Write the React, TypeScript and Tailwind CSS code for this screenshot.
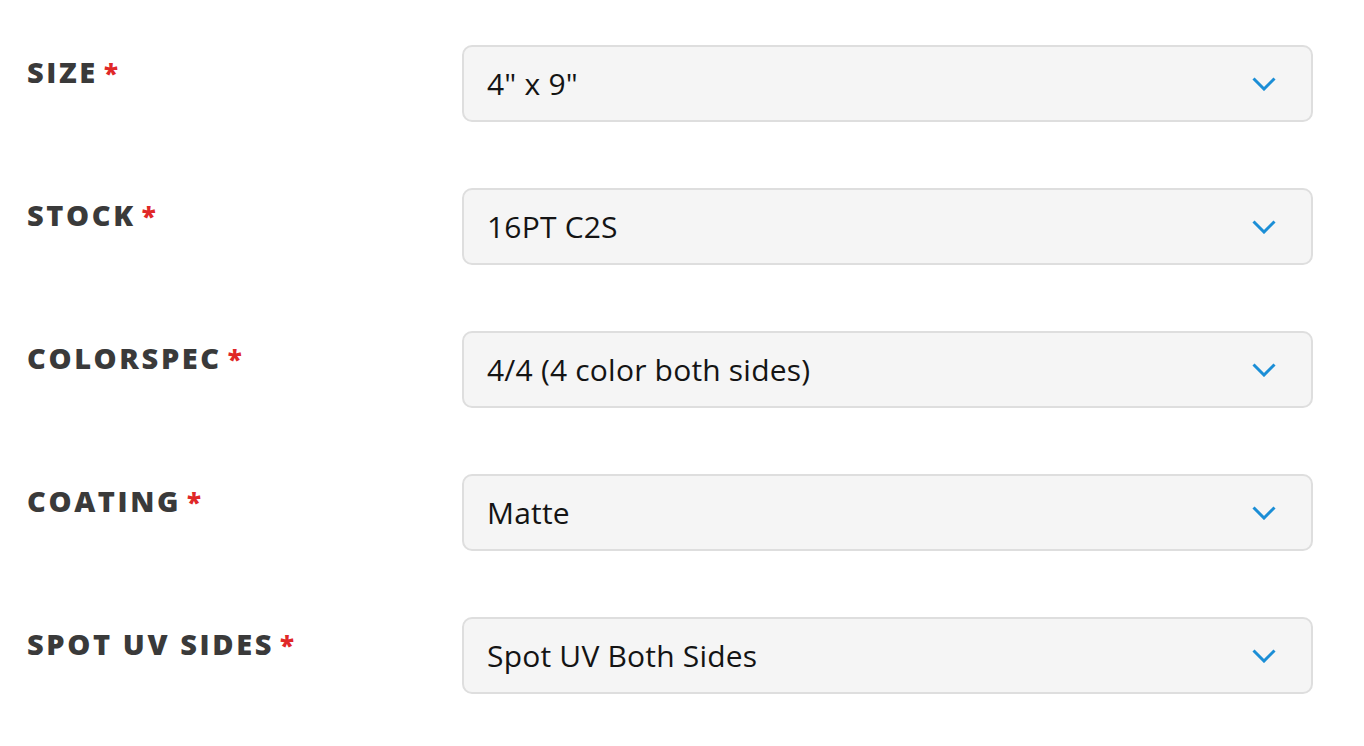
import React from "react";

const fields = [
  { label: "SIZE", value: '4" x 9"' },
  { label: "STOCK", value: "16PT C2S" },
  { label: "COLORSPEC", value: "4/4 (4 color both sides)" },
  { label: "COATING", value: "Matte" },
  { label: "SPOT UV SIDES", value: "Spot UV Both Sides" },
];

function Chevron() {
  return (
    <svg width="24" height="14" viewBox="0 0 24 14" fill="none" className="shrink-0">
      <path d="M1.5 1.5 L12 12 L22.5 1.5" stroke="#1b8ed6" strokeWidth="3" />
    </svg>
  );
}

export default function App() {
  return (
    <div className="min-h-screen bg-white pl-[27px] pt-[45px] font-['Open_Sans',sans-serif]">
      <div className="flex flex-col gap-[66px]">
        {fields.map((f) => (
          <div key={f.label} className="flex">
            <div className="w-[435px] shrink-0 pt-[9px]">
              <span className="text-[29px] font-extrabold leading-[36px] tracking-[2.6px] text-[#3a3a3a]">
                {f.label}
              </span>
              <span className="ml-[6px] text-[26px] font-extrabold leading-[36px] text-[#e02828]">*</span>
            </div>
            <div className="flex h-[77px] w-[851px] items-center justify-between rounded-[10px] border-2 border-[#dedede] bg-[#f5f5f5] pl-[23px] pr-[35px]">
              <span className="text-[30px] tracking-[0.2px] text-[#141414]">{f.value}</span>
              <Chevron />
            </div>
          </div>
        ))}
      </div>
    </div>
  );
}
